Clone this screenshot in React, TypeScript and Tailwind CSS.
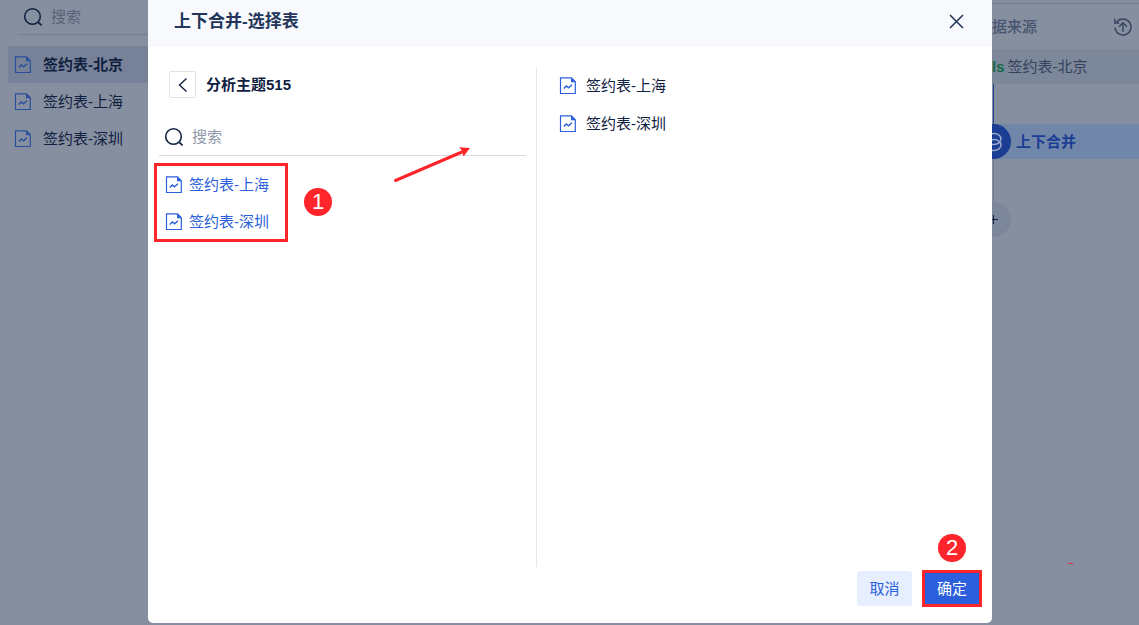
import React from "react";

function TableIcon() {
  return (
    <svg width="18" height="18" viewBox="0 0 18 18" fill="none" className="shrink-0" aria-hidden="true">
      <path d="M1.5 0.9H12.5L16.3 4.7V16.5H1.5Z" stroke="currentColor" strokeWidth="1.2" />
      <path d="M12 0.5V5.2H16.9Z" fill="currentColor" />
      <path d="M4.8 11.6L7.3 8.9L9.6 10.8L12.9 7.8" stroke="currentColor" strokeWidth="1.4" />
    </svg>
  );
}

function SearchIcon() {
  return (
    <svg width="20" height="20" viewBox="0 0 20 20" fill="none" className="shrink-0" aria-hidden="true">
      <circle cx="9.5" cy="9.5" r="7.8" stroke="currentColor" strokeWidth="1.6" />
      <path d="M14.8 14.8L18.6 18.4" stroke="currentColor" strokeWidth="1.8" />
    </svg>
  );
}

function Badge({ children }: { children: React.ReactNode }) {
  return (
    <span className="flex size-7 items-center justify-center rounded-full bg-[#ff252b] text-[22px] leading-7 text-white">
      {children}
    </span>
  );
}

function SourceList() {
  const rows = ["签约表-北京", "签约表-上海", "签约表-深圳"];
  return (
    <aside className="w-[148px] shrink-0 pl-2">
      <label className="ml-[10px] flex h-[35px] items-center gap-2 border-b border-[#767f92] pl-[5px] text-[#10213f]">
        <SearchIcon />
        <input
          aria-label="搜索数据表"
          placeholder="搜索"
          className="w-full min-w-0 bg-transparent text-[15px] leading-5 outline-none placeholder:text-[#586379]"
        />
      </label>
      <ul className="mt-[11px]">
        {rows.map((name, i) => (
          <li key={name}>
            <button
              className={
                i === 0
                  ? "flex h-[37px] w-full items-center gap-[11px] bg-[#778299] pl-[6px] font-bold"
                  : "flex h-[37px] w-full items-center gap-[11px] pl-[6px]"
              }
            >
              <span className="text-[#2a4f9f]">
                <TableIcon />
              </span>
              {name}
            </button>
          </li>
        ))}
      </ul>
    </aside>
  );
}

function StepsPanel() {
  return (
    <aside className="w-[147px] shrink-0 overflow-hidden pt-[3px] text-[#34425e]">
      <div className="flex h-[46px] items-center justify-between border-t border-[#6f7a90] pr-[7px]">
        <h2 className="font-medium text-[#465470]">据来源</h2>
        <button aria-label="更新">
          <svg width="18" height="18" viewBox="0 0 18 18" fill="none" stroke="currentColor" strokeWidth="1.4">
            <path d="M2.6 4.2A8 8 0 1 1 1 9.5" />
            <path d="M0.8 0.8V5H5.2" />
            <path d="M9 14V5M5 8.8L9 4.8L13 8.8" />
          </svg>
        </button>
      </div>
      <div className="flex h-[35px] items-center gap-[3px] bg-[#7c8799]">
        <span className="font-bold text-[#186b45]">ls</span>
        <span>签约表-北京</span>
      </div>
      <div className="ml-px h-10 w-px bg-[#1d4296]" />
      <div className="flex h-[35px] items-center gap-[5px] bg-[#7187a9] font-bold text-[#1b3e94]">
        <span className="-ml-4 flex size-[35px] shrink-0 items-center justify-center rounded-full bg-[#1b3e94] text-[#9ba9c8]">
          <svg width="18" height="20" viewBox="0 0 18 20" fill="none" stroke="currentColor" strokeWidth="1.5" aria-hidden="true">
            <ellipse cx="9" cy="7" rx="7" ry="5.5" />
            <ellipse cx="9" cy="13" rx="7" ry="5.5" />
          </svg>
        </span>
        上下合并
      </div>
      <div className="ml-px h-[43px] w-px bg-[#717b90]" />
      <button
        aria-label="添加步骤"
        className="-ml-4 flex size-[35px] items-center justify-center rounded-full bg-[#7b869b] text-[#10213f]"
      >
        <svg width="9" height="9" viewBox="0 0 9 9" stroke="currentColor" aria-hidden="true">
          <path d="M4.5 0V9M0 4.5H9" />
        </svg>
      </button>
      <div className="mt-[326px] ml-[76px] h-px w-[5px] bg-[#d9303f]" />
    </aside>
  );
}

function MergeDialog() {
  const tables = ["签约表-上海", "签约表-深圳"];
  return (
    <section
      role="dialog"
      aria-labelledby="dialog-title"
      className="mb-[2px] flex min-w-0 flex-1 flex-col overflow-hidden rounded-b-[5px] bg-white"
    >
      <header className="flex h-[47px] items-center justify-between bg-[#f7f9fd] pr-[28px] pb-1 pl-[26px]">
        <h1 id="dialog-title" className="text-[17px] font-bold text-[#23355a]">
          上下合并-选择表
        </h1>
        <button aria-label="关闭" className="text-[#1f3152]">
          <svg width="15" height="15" viewBox="0 0 15 15" stroke="currentColor" strokeWidth="1.5">
            <path d="M1 1L14 14M14 1L1 14" />
          </svg>
        </button>
      </header>

      <div className="mt-5 flex flex-1">
        <div className="flex w-[389px] flex-col border-r border-[#e4e7ee] pr-[10px]">
          <div className="flex items-center gap-[10px] pt-1 pl-[21px]">
            <button
              aria-label="返回"
              className="flex size-[27px] items-center justify-center rounded-[2px] border border-[#dfe2e9]"
            >
              <svg width="10" height="16" viewBox="0 0 10 16" fill="none" stroke="currentColor" strokeWidth="1.4">
                <path d="M8.5 1.5L1.5 8L8.5 14.5" />
              </svg>
            </button>
            <h2 className="font-bold">分析主题515</h2>
          </div>

          <div className="relative mt-[21px] ml-[11px]">
            <label className="flex h-[37px] items-center gap-2 border-b border-[#d9dce4] pl-[5px]">
              <SearchIcon />
              <input
                aria-label="搜索"
                placeholder="搜索"
                className="w-full min-w-0 bg-transparent text-[15px] leading-5 outline-none placeholder:text-[#8f98aa]"
              />
            </label>
            <svg
              width="78"
              height="38"
              viewBox="0 0 78 38"
              className="absolute top-[26px] left-[234px]"
              aria-hidden="true"
            >
              <path d="M2.5 35.5L69 7" stroke="#ff252b" strokeWidth="3" strokeLinecap="round" />
              <path d="M77 3L66.5 2.2L69 6L70.5 11.5Z" fill="#ff252b" />
            </svg>
          </div>

          <div className="relative mt-[7px] ml-[6px] w-[134px] border-3 border-[#ff252b]">
            <ul className="-mb-px">
              {tables.map((name) => (
                <li key={name}>
                  <button className="flex h-[37px] w-full items-center gap-[6px] pl-2 text-[#2b5fdb]">
                    <TableIcon />
                    {name}
                  </button>
                </li>
              ))}
            </ul>
            <div className="absolute top-[22px] left-[147px]">
              <Badge>1</Badge>
            </div>
          </div>
        </div>

        <ul className="flex-1 pl-[22px]">
          {tables.map((name) => (
            <li key={name} className="flex h-[38px] items-center gap-[9px]">
              <span className="text-[#2b5fdb]">
                <TableIcon />
              </span>
              {name}
            </li>
          ))}
        </ul>
      </div>

      <footer className="flex items-center justify-end gap-[10px] pt-[3px] pr-[10px] pb-4">
        <button className="h-[35px] w-[55px] rounded-[3px] bg-[#e6eeff] text-[#2b5fdb]">取消</button>
        <div className="relative">
          <button className="h-[37px] w-[60px] border-3 border-[#ff252b] bg-[#2b5fdb] text-white">确定</button>
          <div className="absolute -top-9 left-4">
            <Badge>2</Badge>
          </div>
        </div>
      </footer>
    </section>
  );
}

export default function App() {
  return (
    <main className="flex min-h-screen bg-[#868f9f] font-['Liberation_Sans','Noto_Sans_CJK_SC',sans-serif] text-[15px] leading-5 text-[#10213f]">
      <SourceList />
      <MergeDialog />
      <StepsPanel />
    </main>
  );
}
